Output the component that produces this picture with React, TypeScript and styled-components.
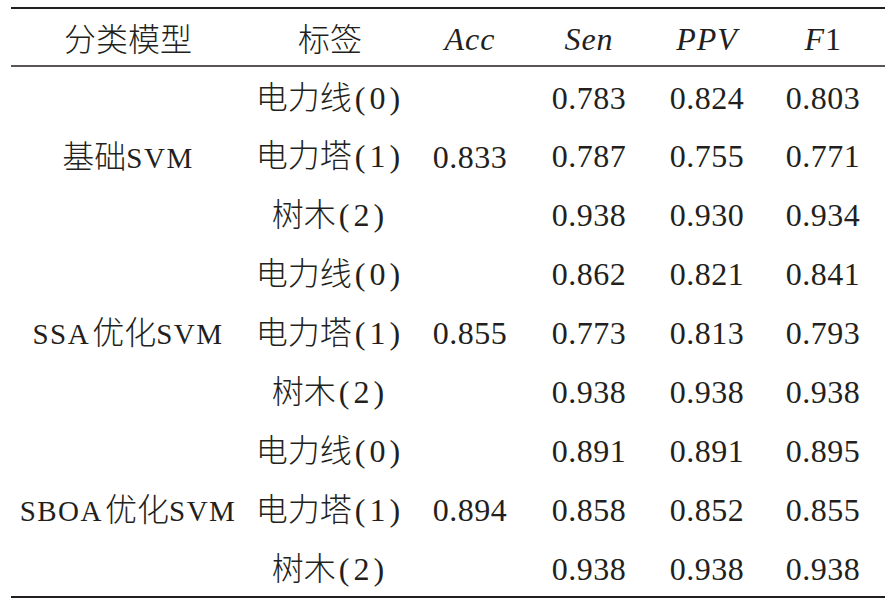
import React from 'react';
import styled, {createGlobalStyle} from "styled-components";

const GlobalStyle = createGlobalStyle`
    html, body {
        margin: 0;
        padding: 0;
        background: #fff;
    }
`

type Row = {
    label: string
    cls: number
    sen: string
    ppv: string
    f1: string
}

type Group = {
    algo: string
    acc: string
    rows: Row[]
}

const groups: Group[] = [
    {
        algo: '', acc: '0.833', rows: [
            {label: '电力线', cls: 0, sen: '0.783', ppv: '0.824', f1: '0.803'},
            {label: '电力塔', cls: 1, sen: '0.787', ppv: '0.755', f1: '0.771'},
            {label: '树木', cls: 2, sen: '0.938', ppv: '0.930', f1: '0.934'},
        ]
    },
    {
        algo: 'SSA', acc: '0.855', rows: [
            {label: '电力线', cls: 0, sen: '0.862', ppv: '0.821', f1: '0.841'},
            {label: '电力塔', cls: 1, sen: '0.773', ppv: '0.813', f1: '0.793'},
            {label: '树木', cls: 2, sen: '0.938', ppv: '0.938', f1: '0.938'},
        ]
    },
    {
        algo: 'SBOA', acc: '0.894', rows: [
            {label: '电力线', cls: 0, sen: '0.891', ppv: '0.891', f1: '0.895'},
            {label: '电力塔', cls: 1, sen: '0.858', ppv: '0.852', f1: '0.855'},
            {label: '树木', cls: 2, sen: '0.938', ppv: '0.938', f1: '0.938'},
        ]
    },
];

const widths = [234, 170, 110, 128, 108, 124];

export default function App() {
    return (
        <>
            <GlobalStyle/>
            <Page>
                <Table>
                    <colgroup>
                        {widths.map((w, i) => <col key={i} style={{width: w}}/>)}
                    </colgroup>
                    <thead>
                    <HeadRow>
                        <Th>分类模型</Th>
                        <Th>标签</Th>
                        <Th><Var>Acc</Var></Th>
                        <Th><Var>Sen</Var></Th>
                        <Th><Var>PPV</Var></Th>
                        <Th><Var>F</Var><Num>1</Num></Th>
                    </HeadRow>
                    </thead>
                    <tbody>
                    {groups.map((g, gi) => g.rows.map((r, ri) => (
                        <BodyRow key={`${gi}-${ri}`}>
                            {ri === 0 && (
                                <Td rowSpan={3}>
                                    {g.algo === ''
                                        ? <>基础<Latin>SVM</Latin></>
                                        : <><Latin $gap>{g.algo}</Latin>优化<Latin>SVM</Latin></>}
                                </Td>
                            )}
                            <Td>{r.label}<Paren>({r.cls})</Paren></Td>
                            {ri === 0 && <Td rowSpan={3}><Num>{g.acc}</Num></Td>}
                            <Td><Num>{r.sen}</Num></Td>
                            <Td><Num>{r.ppv}</Num></Td>
                            <Td><Num>{r.f1}</Num></Td>
                        </BodyRow>
                    )))}
                    </tbody>
                </Table>
            </Page>
        </>
    );
}

const Page = styled.div`
    padding: 7px 8px 0 11px;
    width: 893px;
    height: 607px;
    box-sizing: border-box;
    background: #fff;
    color: #231f20;
`

const Table = styled.table`
    width: 874px;
    border-collapse: collapse;
    table-layout: fixed;
    border-top: 2px solid #231f20;
    border-bottom: 2px solid #231f20;
    font-family: "Noto Sans CJK SC", "Liberation Serif", sans-serif;
    font-weight: 300;
    font-size: 32px;
`

const HeadRow = styled.tr`
    height: 58px;
    border-bottom: 2px solid #5a5556;
`

const BodyRow = styled.tr`
    height: 59px;
`

const Th = styled.th`
    font-weight: 300;
    text-align: center;
    vertical-align: middle;
    padding: 0;
    line-height: 1;
    white-space: nowrap;
`

const Td = styled.td`
    text-align: center;
    vertical-align: middle;
    padding: 0;
    line-height: 1;
    white-space: nowrap;
`

const Var = styled.span`
    font-family: "Liberation Serif", serif;
    font-style: italic;
    font-weight: 400;
    font-size: 32px;
    letter-spacing: 1px;
`

const Num = styled.span`
    font-family: "Liberation Serif", serif;
    font-weight: 400;
    font-size: 32px;
    letter-spacing: 0.5px;
`

const Latin = styled.span<{ $gap?: boolean }>`
    font-family: "Liberation Serif", serif;
    font-weight: 400;
    font-size: 29px;
    letter-spacing: 1.5px;
    margin-right: ${(props) => props.$gap ? '2px' : '0'};
`

const Paren = styled.span`
    font-family: "Liberation Serif", serif;
    font-weight: 400;
    font-size: 32px;
    letter-spacing: 4px;
    margin-left: 3px;
`
